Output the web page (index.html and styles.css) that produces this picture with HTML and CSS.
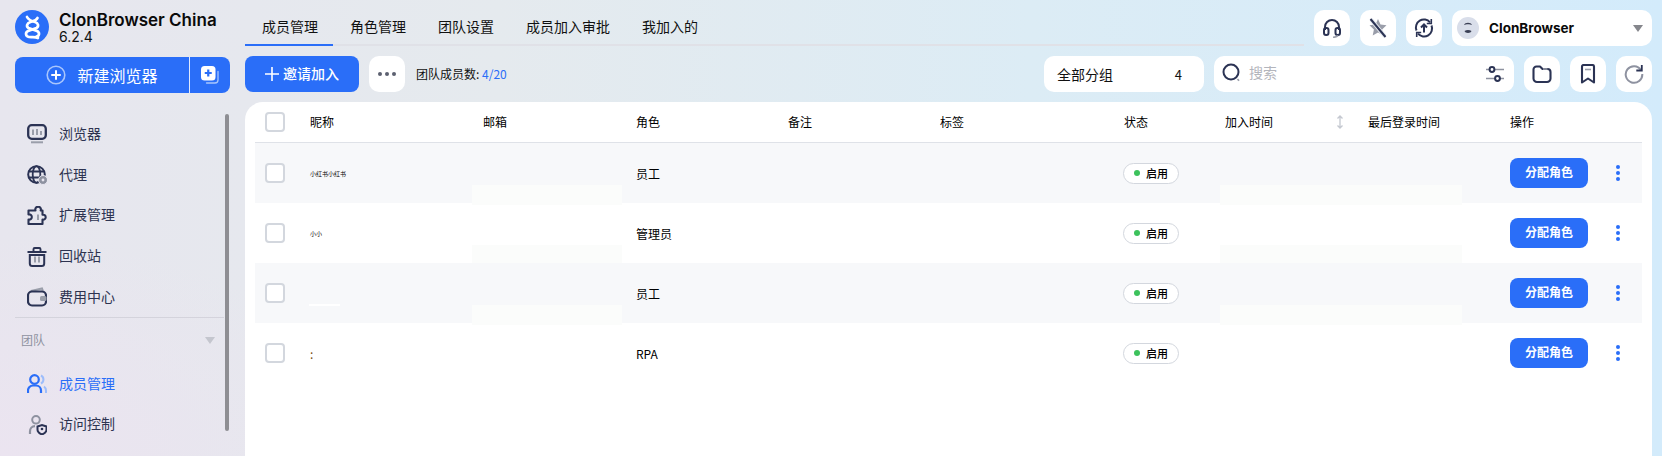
FILE: index.html
```html
<!DOCTYPE html>
<html lang="zh-CN">
<head>
<meta charset="utf-8">
<title>ClonBrowser China</title>
<link rel="stylesheet" href="styles.css">
</head>
<body>
<div class="app">
  <aside class="sidebar">
    <div class="brand">
      <svg class="logo" viewBox="0 0 34 34"><circle cx="17" cy="17" r="17" fill="#2a6ef8"/><path d="M12 7c1.500 3 4.500 4 8 5 3.500 1 4 4.500 1.500 6L13 21c-3 1.500-2.500 5.500 1 6 3 .4 6-.5 9 1" fill="none" stroke="#fff" stroke-width="2.700" stroke-linecap="round"/><path d="M22.500 8c-1 2.500-4 3-7 4-3.800 1.200-4.500 4.500-2 6l8.500 3c3 1.500 2.500 5-.5 5.500" fill="none" stroke="#fff" stroke-width="2.700" stroke-linecap="round"/></svg>
      <div class="brand-text">
        <div class="brand-name">ClonBrowser China</div>
        <div class="brand-ver">6.2.4</div>
      </div>
    </div>
    <div class="new-btn">
      <div class="new-main">
        <svg class="ic-20" viewBox="0 0 20 20"><circle cx="10" cy="10" r="8.800" fill="none" stroke="#a9c6fc" stroke-width="1.600"/><path d="M10 6v8M6 10h8" stroke="#fff" stroke-width="2" stroke-linecap="round"/></svg>
        <span>新建浏览器</span>
      </div>
      <div class="new-side">
        <svg class="ic-20" viewBox="0 0 20 20"><path d="M18 6.500V15a3 3 0 0 1-3 3H6.500" fill="none" stroke="#a9c6fc" stroke-width="1.300" stroke-linecap="round"/><rect x="1" y="1" width="14.500" height="14.500" rx="3.500" fill="#fff"/><path d="M8.250 4.500v7M4.750 8h7" stroke="#2a6ef8" stroke-width="2.200"/></svg>
      </div>
    </div>
    <nav class="nav">
      <div class="nav-item">
        <svg class="ic-20" viewBox="0 0 20 20"><rect x="1.200" y="1.200" width="17.600" height="13.600" rx="3.500" fill="none" stroke="#2b3354" stroke-width="2.300"/><path d="M6 5.500v5.500M10 5v6M14 7v4" stroke="#9a9eaa" stroke-width="2"/><path d="M4 18.300h12" stroke="#9a9eaa" stroke-width="2"/></svg>
        <span>浏览器</span>
      </div>
      <div class="nav-item">
        <svg class="ic-20" viewBox="0 0 20 20"><circle cx="9.500" cy="9.500" r="8.300" fill="none" stroke="#2b3354" stroke-width="2"/><ellipse cx="9.500" cy="9.500" rx="3.800" ry="8.300" fill="none" stroke="#2b3354" stroke-width="1.800"/><path d="M1.500 6.500h16M1.500 12.500h16" stroke="#2b3354" stroke-width="1.800"/><circle cx="16" cy="15" r="4.500" fill="#8e92a0" stroke="#e8e6f0"/><circle cx="16" cy="15" r="1.400" fill="#e8e6f0"/></svg>
        <span>代理</span>
      </div>
      <div class="nav-item">
        <svg class="ic-20" viewBox="0 0 20 20"><path d="M7 4.500h1.500a2.800 2.800 0 1 1 5.200 0H15.500v4.300a2.500 2.500 0 1 1 0 4.800V18H1.500v-4.500a2.600 2.600 0 1 0 0-5V4.500z" fill="none" stroke="#2b3354" stroke-width="2.100" stroke-linejoin="round"/><path d="M11 8.500v5.500" stroke="#9a9eaa" stroke-width="2"/></svg>
        <span>扩展管理</span>
      </div>
      <div class="nav-item">
        <svg class="ic-20" viewBox="0 0 20 20"><path d="M.5 5h19M6.500 4.500V2.200a1.200 1.200 0 0 1 1.200-1.200h4.600a1.200 1.200 0 0 1 1.200 1.200v2.300" fill="none" stroke="#2b3354" stroke-width="1.900"/><path d="M2.800 8v8.500a2.500 2.500 0 0 0 2.500 2.500h9.400a2.500 2.500 0 0 0 2.500-2.500V8z" fill="none" stroke="#2b3354" stroke-width="2"/><path d="M8 9.500v6M12 9.500v6" stroke="#9a9eaa" stroke-width="2"/></svg>
        <span>回收站</span>
      </div>
      <div class="nav-item">
        <svg class="ic-20" viewBox="0 0 20 20"><path d="M4 4l11-2.500.8 2" fill="none" stroke="#9a9eaa" stroke-width="2"/><rect x="1" y="4.500" width="18" height="14" rx="4" fill="none" stroke="#2b3354" stroke-width="2.200"/><rect x="13" y="9" width="6.500" height="5" rx="1.500" fill="#9a9eaa"/></svg>
        <span>费用中心</span>
      </div>
    </nav>
    <div class="side-rule"></div>
    <div class="group-head">
      <span>团队</span>
      <i class="caret caret-light"></i>
    </div>
    <nav class="nav">
      <div class="nav-item nav-active">
        <svg class="ic-20" viewBox="0 0 20 20"><circle cx="7.500" cy="5.500" r="4.300" fill="none" stroke="#2a6ef8" stroke-width="2.200"/><path d="M1 19v-2.500a5 5 0 0 1 5-5h3a5 5 0 0 1 5 5V19" fill="none" stroke="#2a6ef8" stroke-width="2.200"/><path d="M14 1.500a4.500 4.500 0 0 1 0 8M17 12.500a5 5 0 0 1 2 4V19" fill="none" stroke="#9dbdfb" stroke-width="2"/></svg>
        <span>成员管理</span>
      </div>
      <div class="nav-item">
        <svg class="ic-20" viewBox="0 0 20 20"><circle cx="9" cy="4.800" r="3.800" fill="none" stroke="#8e92a0" stroke-width="2"/><path d="M3 19v-2.500c0-3 2-5.300 5-5.300" fill="none" stroke="#8e92a0" stroke-width="2.200"/><path d="M10.500 11.500l4.500-1.500 4.500 1.500v3c0 2.500-2 4-4.500 5-2.500-1-4.500-2.500-4.500-5z" fill="none" stroke="#2b3354" stroke-width="2"/><circle cx="15" cy="14" r="1.300" fill="#2b3354"/></svg>
        <span>访问控制</span>
      </div>
      <div class="nav-item">
        <svg class="ic-20" viewBox="0 0 20 20"><circle cx="10" cy="10" r="8.500" fill="none" stroke="#2b3354" stroke-width="2.200"/></svg>
      </div>
    </nav>
    <div class="scrollbar"></div>
  </aside>

  <main class="main">
    <header class="topbar">
      <div class="tabs">
        <div class="tab tab-active">成员管理</div>
        <div class="tab">角色管理</div>
        <div class="tab">团队设置</div>
        <div class="tab">成员加入审批</div>
        <div class="tab">我加入的</div>
      </div>
      <div class="square">
        <svg class="ic-20" viewBox="0 0 20 20"><path d="M3 12V9a7 7 0 0 1 14 0v3" fill="none" stroke="#2b3354" stroke-width="2"/><rect x="2" y="10" width="4.500" height="7" rx="2" fill="none" stroke="#2b3354" stroke-width="2"/><rect x="13.500" y="10" width="4.500" height="7" rx="2" fill="none" stroke="#2b3354" stroke-width="2"/><path d="M16 17.500c-1 1.500-3 1.800-5 1.800" fill="none" stroke="#9a9eaa" stroke-width="1.600"/></svg>
      </div>
      <div class="square">
        <svg class="ic-20" viewBox="0 0 20 20"><path d="M10 1l2.500 5.500 6 .8-4.400 4.100 1.200 6L10 14.500l-5.300 2.900 1.200-6L1.500 7.300l6-.8z" fill="#9a9eaa"/><path d="M3 1.500l14 17" stroke="#e8ecf2" stroke-width="4"/><path d="M2.500 1l15 18" stroke="#2b3354" stroke-width="2"/></svg>
      </div>
      <div class="square">
        <svg class="ic-20" viewBox="0 0 20 20"><path d="M2.500 12.500A8 8 0 0 1 16 4.300M17.500 7.500A8 8 0 0 1 4 15.700" fill="none" stroke="#2b3354" stroke-width="2"/><path d="M17.300 1v4.500h-4.500M2.700 19v-4.500h4.500" fill="none" stroke="#2b3354" stroke-width="1.600"/><path d="M10 14.500V6.500M7 9.500l3-3 3 3" fill="none" stroke="#2b3354" stroke-width="2"/></svg>
      </div>
      <div class="user">
        <svg class="avatar" viewBox="0 0 22 22"><circle cx="11" cy="11" r="11" fill="#d9deea"/><path d="M7 8c1-3 7-3 8 0-2-1-6-1-8 0z" fill="#3a3f55"/><path d="M7.500 14c2-1.500 5-1.500 7 0-.5 2.500-6.500 2.500-7 0z" fill="#3a3f55"/></svg>
        <span class="user-name">ClonBrowser</span>
        <i class="caret"></i>
      </div>
    </header>

    <section class="toolbar">
      <div class="invite">
        <svg class="ic-14" viewBox="0 0 14 14"><path d="M7 0v14M0 7h14" stroke="#fff" stroke-width="1.600"/></svg>
        <span>邀请加入</span>
      </div>
      <div class="square dots-h"><b></b><b></b><b></b></div>
      <div class="count">团队成员数: <em>4/20</em></div>
      <div class="grow"></div>
      <div class="group-select"><span>全部分组</span><span class="group-num">4</span></div>
      <div class="search">
        <svg class="ic-20 search-icon" viewBox="0 0 20 20"><circle cx="9" cy="9" r="7.500" fill="none" stroke="#2b3354" stroke-width="2"/><path d="M15.500 16l1.500 1.800" stroke="#9a9eaa" stroke-width="1.600"/></svg>
        <span class="search-ph">搜索</span>
        <svg class="ic-20" viewBox="0 0 20 20"><path d="M1 5.500h18M1 14.500h18" stroke="#8e92a0" stroke-width="1.600"/><circle cx="7" cy="5.500" r="2.400" fill="#fff" stroke="#2b3354" stroke-width="2"/><circle cx="12.500" cy="14.500" r="2.400" fill="#fff" stroke="#2b3354" stroke-width="2"/></svg>
      </div>
      <div class="square">
        <svg class="ic-20" viewBox="0 0 20 20"><path d="M1.500 5.500A3 3 0 0 1 4.500 2.500h3.500l2.500 2.500h5a3 3 0 0 1 3 3v6.500a3.500 3.500 0 0 1-3.500 3.500H5a3.500 3.500 0 0 1-3.500-3.500z" fill="none" stroke="#2b3354" stroke-width="2.100" stroke-linejoin="round"/><path d="M11 5h4.500" stroke="#9a9eaa" stroke-width="1.600"/></svg>
      </div>
      <div class="square">
        <svg class="ic-20" viewBox="0 0 20 20"><path d="M4 2.500a1.500 1.500 0 0 1 1.500-1.500h9a1.500 1.500 0 0 1 1.500 1.500V18.500l-6-4-6 4z" fill="none" stroke="#2b3354" stroke-width="2.100" stroke-linejoin="round"/><path d="M7 5.500h6" stroke="#9a9eaa" stroke-width="1.600"/></svg>
      </div>
      <div class="square">
        <svg class="ic-20" viewBox="0 0 20 20"><path d="M17 6A8.300 8.300 0 1 0 18.300 10" fill="none" stroke="#8e92a0" stroke-width="2"/><path d="M17.800 1v5.500h-5.500" fill="none" stroke="#2b3354" stroke-width="1.800"/></svg>
      </div>
    </section>

    <section class="card">
      <div class="row row-head">
        <span class="check"></span>
        <span class="th">昵称</span><span class="th">邮箱</span><span class="th">角色</span><span class="th">备注</span><span class="th">标签</span><span class="th">状态</span>
        <span class="th sort-cell">加入时间
          <svg class="sort" viewBox="0 0 8 14"><path d="M4 1v12M1.500 3.500L4 1l2.500 2.500M1.500 10.500L4 13l2.500-2.500" fill="none" stroke="#c4c8d0" stroke-width="1.300"/></svg>
        </span>
        <span class="th">最后登录时间</span><span class="th">操作</span>
      </div>

      <div class="row row-alt">
        <span class="check"></span>
        <span class="frag">小红书小红书</span><span></span><span>员工</span><span></span><span></span>
        <span class="pill"><i></i>启用</span><span></span><span></span>
        <span class="assign">分配角色</span><span class="dots-v"><b></b><b></b><b></b></span>
        <i class="patch patch-mail"></i><i class="patch patch-time"></i>
      </div>

      <div class="row">
        <span class="check"></span>
        <span class="frag">小小</span><span></span><span>管理员</span><span></span><span></span>
        <span class="pill"><i></i>启用</span><span></span><span></span>
        <span class="assign">分配角色</span><span class="dots-v"><b></b><b></b><b></b></span>
        <i class="patch patch-mail"></i><i class="patch patch-time"></i>
      </div>

      <div class="row row-alt">
        <span class="check"></span>
        <span></span><span></span><span>员工</span><span></span><span></span>
        <span class="pill"><i></i>启用</span><span></span><span></span>
        <span class="assign">分配角色</span><span class="dots-v"><b></b><b></b><b></b></span>
        <i class="patch patch-mail"></i><i class="patch patch-time"></i><i class="patch patch-name"></i>
      </div>

      <div class="row">
        <span class="check"></span>
        <span class="frag-dot">:</span><span></span><span>RPA</span><span></span><span></span>
        <span class="pill"><i></i>启用</span><span></span><span></span>
        <span class="assign">分配角色</span><span class="dots-v"><b></b><b></b><b></b></span>
      </div>
    </section>
  </main>
</div>
</body>
</html>
```

FILE: styles.css
```css
* { box-sizing: border-box; }
html, body { margin: 0; height: 100%; overflow: hidden; }
body {
  font-family: "Noto Sans CJK SC", "Noto Sans", sans-serif;
  color: #111;
}
i, em { font-style: normal; }

.app {
  display: flex;
  height: 456px;
  overflow: hidden;
  background:
    radial-gradient(380px 220px at 0 100%, #ebe4f0 0, rgba(235, 228, 240, 0) 100%),
    linear-gradient(90deg, #e7e6ee 0, #e5eaee 30%, #dcecf5 62%, #d3ebfb 100%);
}

.ic-20 { width: 20px; height: 20px; flex: none; display: block; }
.ic-14 { width: 14px; height: 14px; flex: none; display: block; }

/* sidebar */
.sidebar {
  position: relative;
  width: 245px;
  flex: none;
  height: 456px;
  overflow: hidden;
  padding: 10px 15px 0;
}
.brand { display: flex; align-items: center; gap: 10px; height: 34px; }
.logo { width: 34px; height: 34px; flex: none; }
.brand-name {
  font-family: Inter, "Noto Sans", sans-serif;
  font-weight: 600;
  font-size: 17px;
  line-height: 18px;
  color: #0a0a0a;
}
.brand-ver {
  font-family: Inter, "Noto Sans", sans-serif;
  font-size: 14px;
  line-height: 15px;
  color: #111;
}
.new-btn {
  display: flex;
  width: 215px;
  height: 36px;
  margin-top: 13px;
  border-radius: 8px;
  background: #2a6ef8;
  color: #fff;
  font-size: 16px;
}
.new-main {
  flex: 1;
  display: flex;
  align-items: center;
  justify-content: center;
  gap: 11px;
  border-right: 1px solid #dfe9fe;
}
.new-side {
  width: 40px;
  display: flex;
  align-items: center;
  justify-content: center;
}
.nav-item {
  display: flex;
  align-items: center;
  gap: 12px;
  height: 40.75px;
  padding-left: 12px;
  font-size: 14px;
  color: #2d3350;
}
.nav-item span { margin-top: -3px; }
.nav-active { color: #2a6ef8; }
.nav:first-of-type { margin-top: 21px; }
.side-rule { height: 1px; width: 209px; margin-top: -1px; background: #d4d3dc; }
.group-head {
  display: flex;
  align-items: center;
  justify-content: space-between;
  height: 46px;
  width: 200px;
  padding-left: 6px;
  font-size: 12px;
  color: #8e92a0;
}
.group-head span { margin-top: -2px; }
.caret {
  width: 0;
  height: 0;
  border-left: 5.500px solid transparent;
  border-right: 5.500px solid transparent;
  border-top: 7px solid #85868c;
}
.caret-light { border-top-color: #c4c6ce; }
.scrollbar {
  position: absolute;
  left: 225px;
  top: 114px;
  width: 4px;
  height: 317px;
  border-radius: 2px;
  background: #8e8e93;
}

/* main */
.main { flex: 1; min-width: 0; display: flex; flex-direction: column; padding: 10px 10px 0 0; }
.topbar { display: flex; gap: 10px; height: 36px; }
.tabs {
  flex: 1;
  display: flex;
  height: 36px;
  border-bottom: 2px solid #e0e1e7;
}
.tab {
  height: 36px;
  padding: 0 15px 0 17px;
  line-height: 32px;
  font-size: 14px;
  color: #111;
  white-space: nowrap;
}
.tab-active { border-bottom: 2px solid #2a6ef8; }
.square {
  width: 36px;
  height: 36px;
  flex: none;
  display: flex;
  align-items: center;
  justify-content: center;
  border-radius: 10px;
  background: #fff;
}
.user {
  width: 200px;
  flex: none;
  height: 36px;
  display: flex;
  align-items: center;
  padding: 0 9px 0 5px;
  border-radius: 10px;
  background: #fff;
}
.avatar { width: 22px; height: 22px; flex: none; }
.user-name {
  flex: 1;
  margin-left: 10px;
  font-family: Inter, "Noto Sans", sans-serif;
  font-weight: 700;
  font-size: 13.500px;
  color: #0a0a0a;
}

/* toolbar */
.toolbar { display: flex; align-items: center; gap: 10px; height: 36px; margin-top: 10px; }
.invite {
  width: 114px;
  height: 36px;
  display: flex;
  align-items: center;
  justify-content: center;
  gap: 4px;
  border-radius: 8px;
  background: #2a6ef8;
  color: #fff;
  font-size: 14px;
  font-weight: 500;
}
.invite span { margin-top: -3px; }
.dots-h { gap: 3px; }
.dots-h b { width: 4px; height: 4px; border-radius: 50%; background: #5c6070; }
.count { margin-left: 1px; font-size: 12px; color: #111; margin-top: -2px; }
.count em { color: #2a6ef8; }
.grow { flex: 1; }
.group-select {
  width: 160px;
  height: 36px;
  display: flex;
  align-items: center;
  justify-content: space-between;
  padding: 0 22px 0 13px;
  border-radius: 10px;
  background: #fff;
  font-size: 14px;
  color: #111;
}
.group-num { font-size: 13px; }
.search {
  width: 300px;
  height: 36px;
  display: flex;
  align-items: center;
  gap: 7px;
  padding: 0 9px 0 8px;
  border-radius: 10px;
  background: #fff;
}
.search-icon { margin-top: -2px; }
.search-ph { flex: 1; font-size: 14px; color: #b3b5bc; margin-top: -4px; }

/* table */
.card {
  flex: 1;
  margin-top: 10px;
  padding: 0 10px;
  border-radius: 18px 18px 0 0;
  background: #fff;
}
.row {
  position: relative;
  display: grid;
  grid-template-columns: 55px 173px 153px 152px 152px 184px 101px 143px 142px 78px 1fr;
  align-items: center;
  height: 60px;
  font-size: 12px;
  color: #000;
}
.row-head {
  height: 41px;
  border-bottom: 1px solid #dfe2e8;
  grid-template-columns: 55px 173px 153px 152px 152px 184px 101px 143px 142px 1fr;
}
.th { margin-top: -2px; }
.row-alt { background: #f7f8fa; }
.check {
  width: 20px;
  height: 20px;
  margin-left: 10px;
  border: 2px solid #d3d7de;
  border-radius: 4px;
  background: #fff;
}
.sort-cell { position: relative; }
.sort {
  position: absolute;
  left: 111px;
  top: 2px;
  width: 8px;
  height: 14px;
}
.frag {
  font-size: 6px;
  line-height: 6px;
  white-space: nowrap;
  margin-top: 2px;
}
.frag-dot { font-size: 12px; line-height: 1; margin-top: 2px; color: #7a4a10; }
.pill {
  display: inline-flex;
  align-items: center;
  gap: 6px;
  justify-self: start;
  width: 56px;
  height: 21px;
  padding-left: 10px;
  margin-left: -1px;
  border: 1px solid #d3d7de;
  border-radius: 11px;
  background: #fff;
  font-size: 11px;
  font-weight: 500;
  color: #000;
}
.pill i { width: 6px; height: 6px; border-radius: 50%; background: #3cc25c; flex: none; }
.assign {
  height: 30px;
  line-height: 28px;
  text-align: center;
  border-radius: 8px;
  background: #2a6ef8;
  color: #fff;
  font-weight: 600;
}
.dots-v {
  display: flex;
  flex-direction: column;
  align-items: center;
  gap: 2px;
  width: 60px;
}
.dots-v b { width: 4px; height: 4px; border-radius: 50%; background: #2a6ef8; }
.patch {
  position: absolute;
  bottom: -2px;
  height: 20px;
  background: #fbfcfb;
}
.patch-mail { left: 217px; width: 150px; }
.patch-time { left: 965px; width: 242px; }
.patch-name { left: 54px; bottom: 17px; width: 31px; height: 2px; background: #fff; }
```
